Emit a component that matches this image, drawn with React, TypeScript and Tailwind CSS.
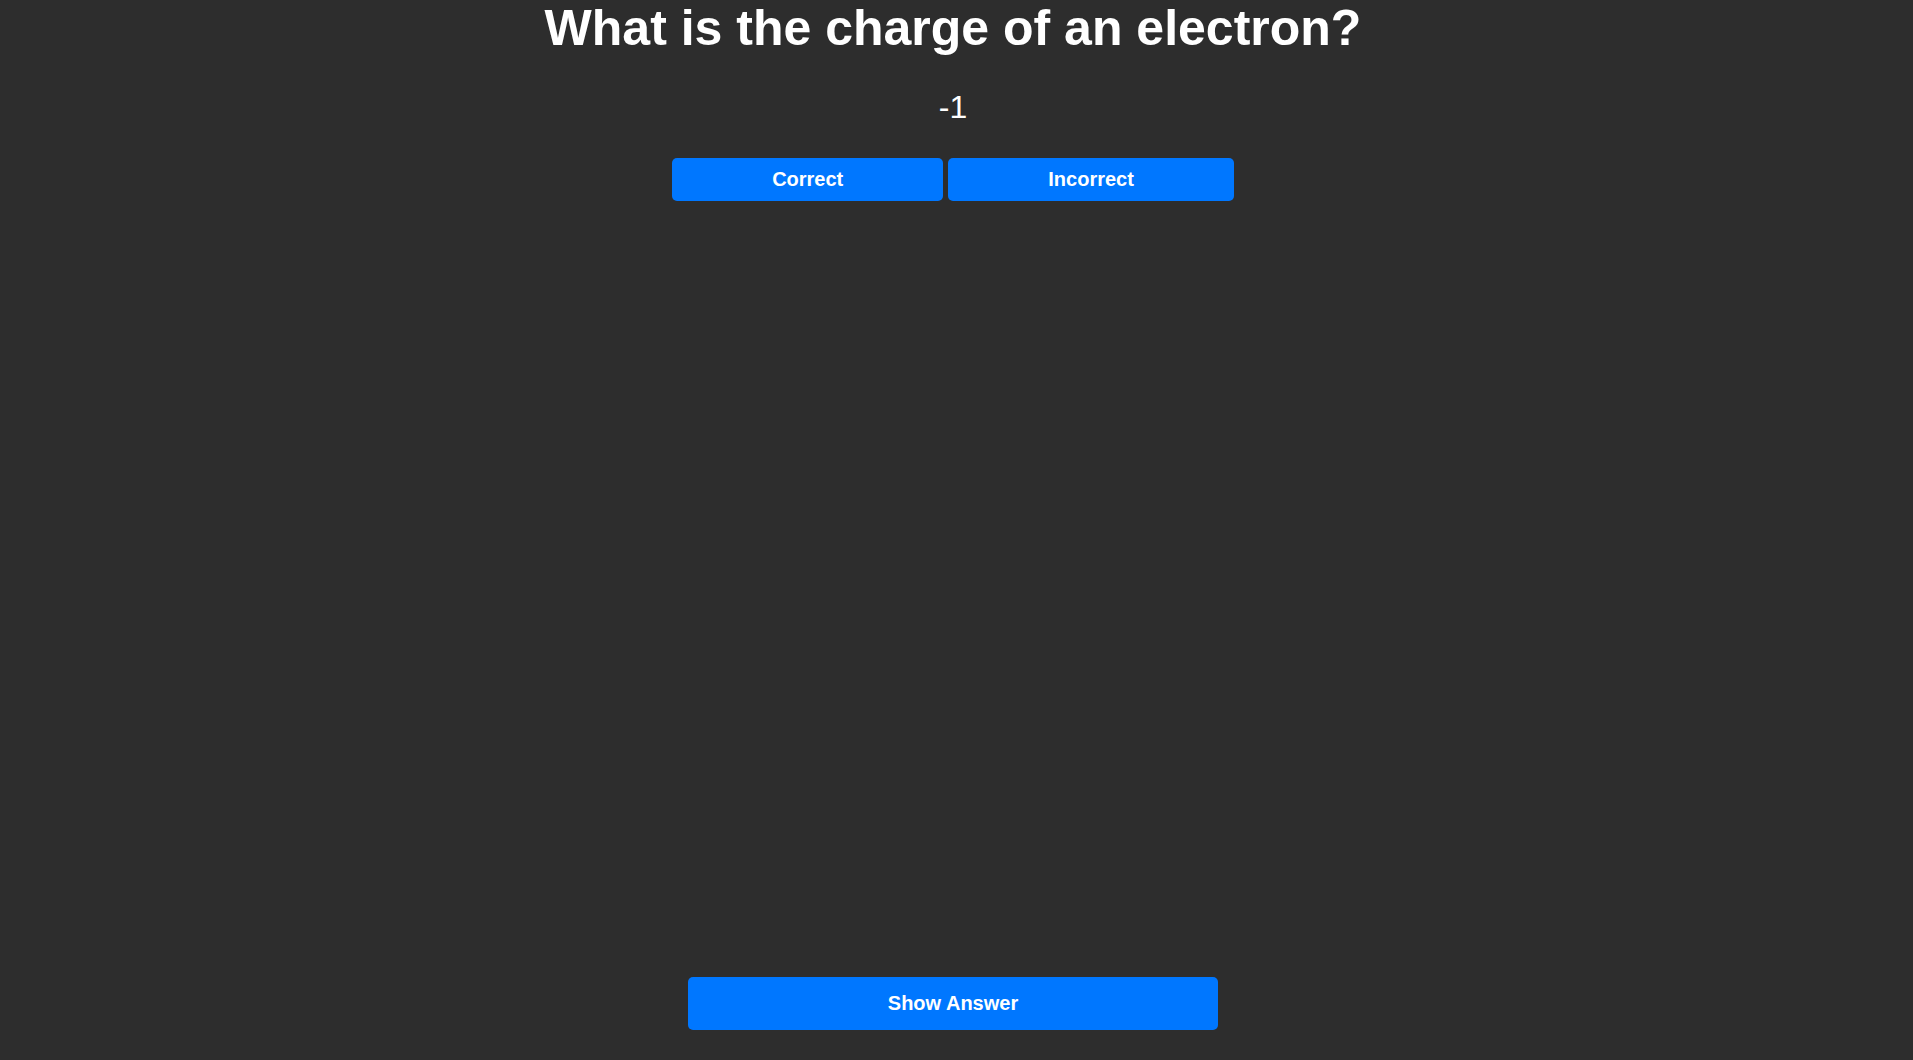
import React from "react";

export default function App() {
  return (
    <div className="h-screen w-full bg-[#2d2d2d] text-white flex flex-col items-center pr-[7px] font-['Liberation_Sans',Arial,sans-serif]">
      <div className="flex flex-col items-center">
        <h1 className="text-[50px] font-bold leading-[57px] m-0">
          What is the charge of an electron?
        </h1>
        <p className="mt-8 text-[32px] leading-[37px]">-1</p>
        <div className="mt-8 flex gap-[5px]">
          <button className="bg-[#0077ff] text-white text-[20px] font-bold leading-[23px] px-[100px] py-[10px] rounded-[5px]">
            Correct
          </button>
          <button className="bg-[#0077ff] text-white text-[20px] font-bold leading-[23px] px-[100px] py-[10px] rounded-[5px]">
            Incorrect
          </button>
        </div>
      </div>
      <button className="mt-auto mb-[30px] w-[530px] bg-[#0077ff] text-white text-[20px] font-bold leading-[23px] py-[15px] rounded-[5px]">
        Show Answer
      </button>
    </div>
  );
}
